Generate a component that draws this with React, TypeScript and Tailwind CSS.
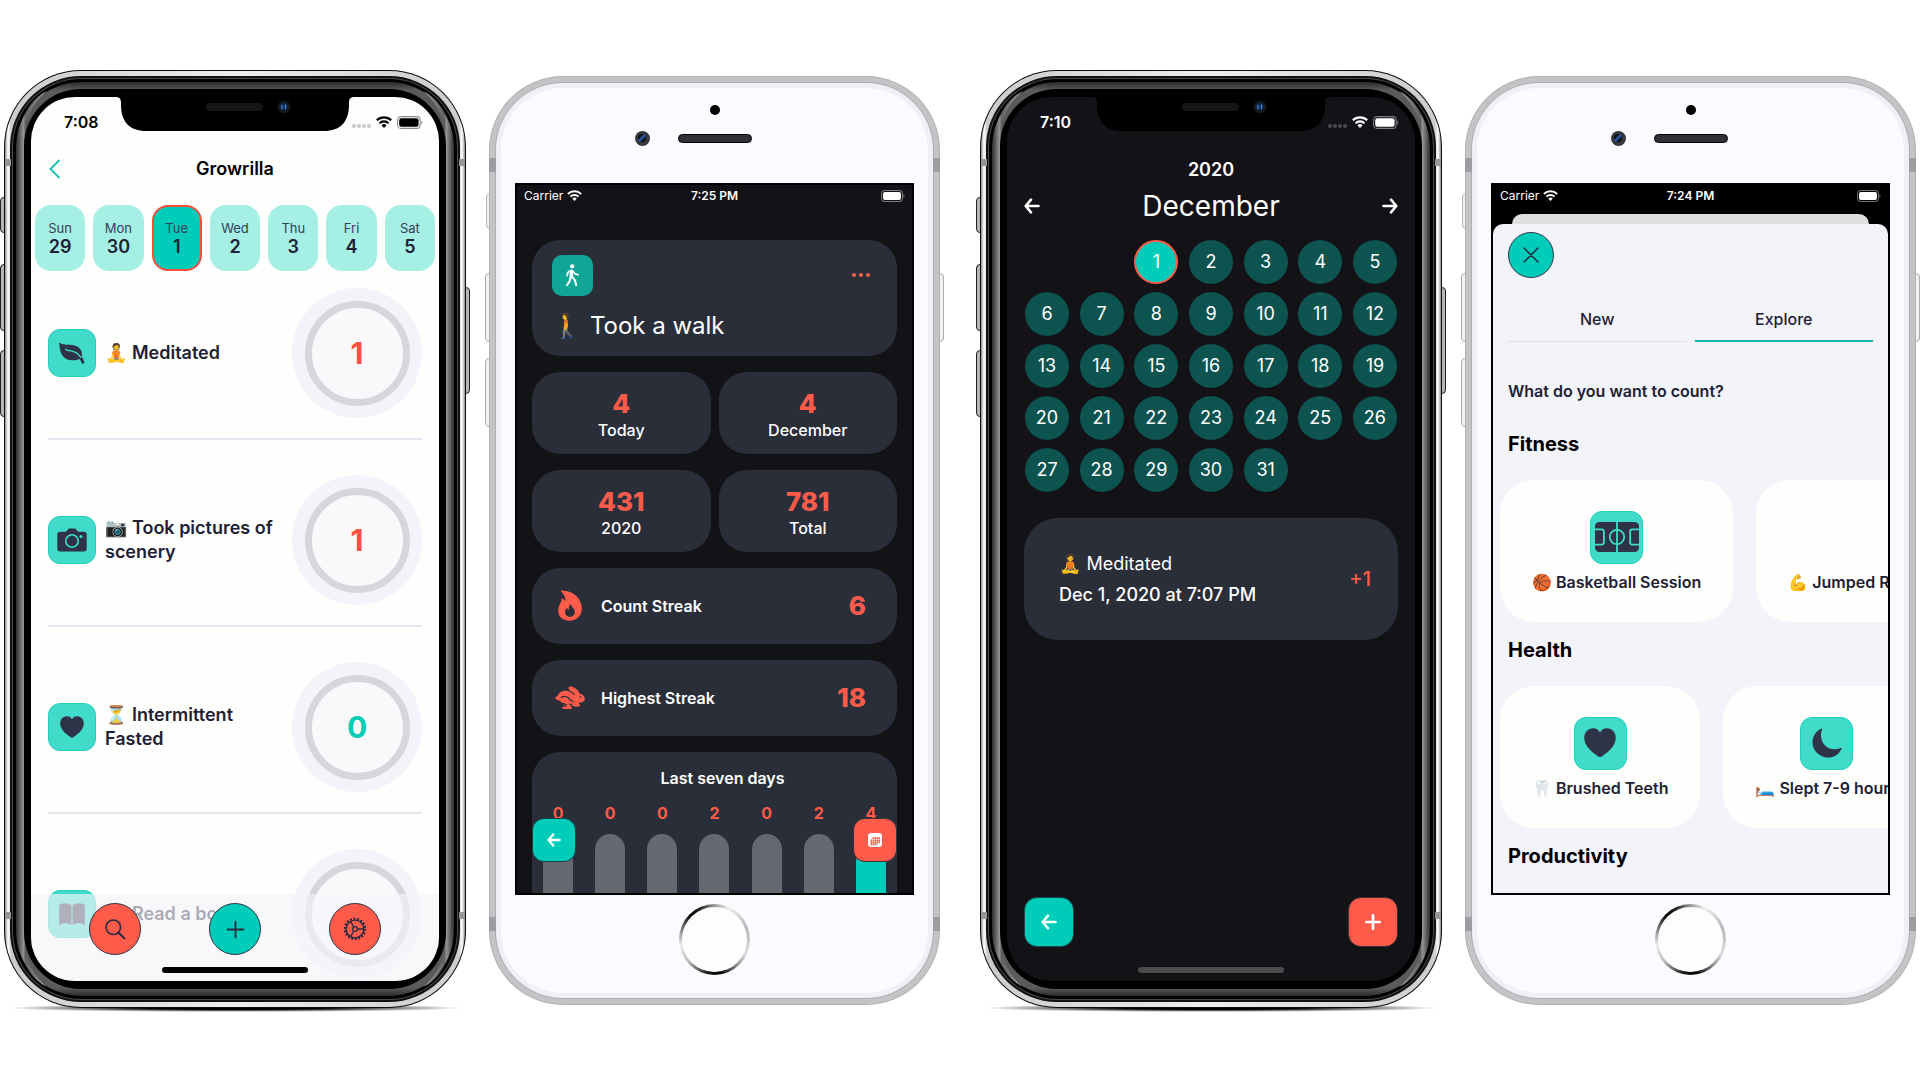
import React from "react";

type IconProps = { className?: string };

const LeafIcon = ({ className }: IconProps) => (
  <svg viewBox="0 0 26 22" className={className} aria-hidden="true">
    <path
      fill="currentColor"
      d="M.4.6C.2 8.6 2.600 17.800 12.500 18.300c3.300.2 5.700-.2 8-1.200 1 1.100 1.600 2.400 2 3.700.5 1.500 2.900 1.100 2.700-.6-.3-2-1.100-3.800-2.500-5.400C24.200 8.400 20 3.300 12.600 2.900 8.200 2.700 3.600 3.200.4.600z"
    />
    <path
      fill="none"
      stroke="#40dbc9"
      strokeWidth="1.300"
      strokeLinecap="round"
      d="M6.500 7.200c1.600 1.400 3.600 1.500 6.200 1.900 3.700.6 6.700 2.600 9 6.200"
    />
  </svg>
);

const CameraIcon = ({ className }: IconProps) => (
  <svg viewBox="0 0 30 24" className={className} aria-hidden="true">
    <path
      fill="currentColor"
      d="M3 3.800h5.200c.8 0 1.200-.3 1.700-1l1-1.400C11.400.6 12 .4 12.900.4h4.300c.9 0 1.500.2 2 1l1 1.400c.5.7.9 1 1.700 1H27c1.700 0 2.700 1 2.700 2.700v14.300c0 1.700-1 2.700-2.700 2.700H3C1.300 23.500.3 22.500.3 20.800V6.500c0-1.700 1-2.700 2.700-2.700z"
    />
    <circle cx="15" cy="13" r="6.200" fill="none" stroke="#40dbc9" strokeWidth="1.600" />
    <circle cx="24" cy="8.600" r="1.500" fill="#40dbc9" />
  </svg>
);

const HeartIcon = ({ className }: IconProps) => (
  <svg viewBox="0 0 24 22" className={className} aria-hidden="true">
    <path
      fill="currentColor"
      d="M12 21.800c-.4 0-.9-.2-1.300-.5C4.400 17.200.2 12.600.2 7.300.2 3.100 3.100.2 6.800.2 9.100.2 11 1.400 12 3.300 13 1.400 14.900.2 17.200.2c3.700 0 6.600 2.900 6.600 7.100 0 5.300-4.200 9.900-10.500 14-.4.300-.9.500-1.300.5z"
    />
  </svg>
);

const BookIcon = ({ className }: IconProps) => (
  <svg viewBox="0 0 26 22" className={className} aria-hidden="true">
    <path
      fill="currentColor"
      d="M12.500 2.400C10.900.9 8.700.2 6.500.2 4 .2 1.800.8.2 2v19.800c1.600-1 3.700-1.500 6-1.500 2.300 0 4.600.5 6.300 1.700zM13.500 2.400C15.100.9 17.300.2 19.500.2c2.500 0 4.700.6 6.300 1.800v19.800c-1.600-1-3.700-1.500-6-1.500-2.300 0-4.600.5-6.300 1.700z"
    />
  </svg>
);

const CourtIcon = ({ className }: IconProps) => (
  <svg viewBox="0 0 44 30" className={className} aria-hidden="true">
    <rect x="0" y="0" width="44" height="30" rx="4.500" fill="currentColor" />
    <g fill="none" stroke="#40dbc9" strokeWidth="1.800">
      <path d="M22 0v30" />
      <circle cx="22" cy="15" r="7.200" />
      <path d="M0 7.400h6.500c1.500 0 2.400.9 2.400 2.400v10.400c0 1.500-.9 2.400-2.400 2.400H0M44 7.400h-6.500c-1.500 0-2.400.9-2.400 2.400v10.400c0 1.500.9 2.400 2.400 2.400H44" />
    </g>
  </svg>
);

const MoonIcon = ({ className }: IconProps) => (
  <svg viewBox="0 0 30 30" className={className} aria-hidden="true">
    <path
      fill="currentColor"
      d="M9.500.5c.6-.3 1 0 .8.600C9.400 3 9 5 9 7.200c0 8 5.800 14.100 13.600 14.100 2.200 0 4.200-.4 6.100-1.200.7-.3 1.100.1.800.8C27.200 26 22.200 29.500 16.200 29.500 7.400 29.500.5 22.700.5 14.300.5 8.300 4.100 2.900 9.500.5z"
    />
  </svg>
);

const WalkIcon = ({ className }: IconProps) => (
  <svg viewBox="0 0 16 24" className={className} aria-hidden="true">
    <circle cx="7.600" cy="2.500" r="2.300" fill="currentColor" />
    <g fill="none" stroke="currentColor" strokeLinecap="round" strokeLinejoin="round">
      <path strokeWidth="3.800" d="M7 7.800 6.600 13" />
      <path strokeWidth="1.800" d="M5.600 7.200C3.600 8 2.400 9 2.200 12.400M8.600 7.800l2 2.700 3.400 1" />
      <path strokeWidth="2.200" d="m6 13.800-1 4.400-3 4.500M7.600 13.600l3 3.800 1.300 5.300" />
    </g>
  </svg>
);

const FlameIcon = ({ className }: IconProps) => (
  <svg viewBox="0 0 24 31" className={className} aria-hidden="true">
    <path
      fill="currentColor"
      fillRule="evenodd"
      d="M3.900.6C2.900.3 2.700 1.100 3.300 1.700c2.500 2.500 4 5.200 4.200 8.200.1 1.100-.2 1.300-.8.5C6.200 9.600 5.300 8.900 4.300 8.600c-.7-.2-1 .1-.9.800.4 3.300-3.200 5.500-3.200 11.200 0 6.200 4.500 10.200 11.200 10.200 7.400 0 12.400-5 12.400-12.200C23.800 9.200 15.900.900 3.900.6zM12 26.900c-3 0-5-1.900-5-4.600 0-1.900.8-3 1.500-3.900.4-.5.8-.4.9.2.1.5.4.9.8 1.200.3.200.6 0 .6-.400 0-1.900.3-3.700 1.300-4.900.3-.4.7-.4.800.1.800 3 3.900 4 3.900 7.500 0 2.800-1.900 4.800-4.800 4.800z"
    />
  </svg>
);

const HareIcon = ({ className }: IconProps) => (
  <svg viewBox="0 0 31 23" className={className} aria-hidden="true">
    <path
      fill="currentColor"
      d="M.3 12.500c0-1 .9-1.700 2-1.900C4.300 6.700 7.600 4.800 11.400 5c2.900.2 5.300 1.500 7.300 3.600l2.700.8c-1-1.500-2.600-2.600-4.400-3.700-1.900-1.200-3.300-2.400-3-3.900.3-1.400 2-1.800 4-1 3.300 1.300 6.300 4 7.600 7.300 2.800.4 5.200 2.500 5.200 5.400 0 1.900-1.300 3-3.500 3.200-1.300.1-2.300.3-3.100.9l1.200 1.500c.8 1.100.2 2.200-1.100 2.200h-3.700c-1 0-1.800-.4-2.400-1.200l-1.500-1.600c-.9-.5-1.900-.5-2.800-.1l2.700 2.200c.9.9 1.100 1.700.7 2.500-.5.9-1.400 1.200-2.800 1.100l-5.500-.2c-1.200-.1-1.700-.9-1.400-1.800.3-.8 1-1 2-.9l2.700.1-3.500-2.300c-1.600-1.100-3.100-1.800-2.900-3.400C1.400 14.200.3 13.600.3 12.500z"
    />
    <path
      fill="none"
      stroke="#292e39"
      strokeWidth="1.300"
      strokeLinecap="round"
      d="M6.500 11.800c3.300-1.800 6.600-.8 8 1.300.9 1.500 2.400 2.600 4.200 2.900M5.500 17.800c2.700.3 4.500.8 6.500 1.700"
    />
    <circle cx="26.200" cy="11.300" r=".9" fill="#292e39" />
  </svg>
);

const GearIcon = ({ className }: IconProps) => (
  <svg viewBox="0 0 26 26" className={className} aria-hidden="true">
    <g fill="none" stroke="currentColor">
      <circle cx="13" cy="13" r="11" strokeWidth="2.400" strokeDasharray="2 1.840" />
      <circle cx="13" cy="13" r="9.600" strokeWidth="1.500" />
      <circle cx="13" cy="13" r="2.500" strokeWidth="1.400" />
      <path strokeWidth="1.400" d="M15.500 13h7M11.700 10.800 8.200 4.700M11.700 15.200l-3.500 6.100" />
    </g>
  </svg>
);

const SearchIcon = ({ className }: IconProps) => (
  <svg viewBox="0 0 22 22" className={className} aria-hidden="true">
    <g fill="none" stroke="currentColor" strokeLinecap="round">
      <circle cx="8.700" cy="8.700" r="7.600" strokeWidth="1.700" />
      <path strokeWidth="2.200" d="m14.300 14.300 6 6" />
    </g>
  </svg>
);

const ArrowIcon = ({ className }: IconProps) => (
  <svg viewBox="0 0 16 16" className={className} aria-hidden="true">
    <path
      fill="none"
      stroke="currentColor"
      strokeWidth="2.600"
      strokeLinecap="round"
      strokeLinejoin="round"
      d="M14.500 8H2M7 1.700 1.700 8 7 14.300"
    />
  </svg>
);

const PlusIcon = ({ className, weight }: IconProps & { weight: number }) => (
  <svg viewBox="0 0 18 18" className={className} aria-hidden="true">
    <path fill="none" stroke="currentColor" strokeWidth={weight} strokeLinecap="round" d="M9 1.500v15M1.500 9h15" />
  </svg>
);

const CalendarIcon = ({ className }: IconProps) => (
  <svg viewBox="0 0 14 14" className={className} aria-hidden="true">
    <rect width="14" height="14" rx="3" fill="currentColor" />
    <path
      stroke="#ff5b4a"
      strokeWidth="1.700"
      strokeDasharray="1.700 .4"
      d="M4.600 5.200H12M2.500 7.300H12M2.500 9.400H12M2.500 11.300h6.800"
    />
  </svg>
);

const WifiIcon = ({ className }: IconProps) => (
  <svg viewBox="0 0 16 12" className={className} aria-hidden="true">
    <path fill="currentColor" d="M8 11.900 5.500 9.300a3.600 3.600 0 0 1 5 0z" />
    <g fill="none" stroke="currentColor" strokeWidth="2.100">
      <path d="M3.500 7.200a6.500 6.500 0 0 1 9 0" />
      <path d="M.8 4.300a10.300 10.300 0 0 1 14.400 0" />
    </g>
  </svg>
);

const BatteryIcon = ({ className }: IconProps) => (
  <svg viewBox="0 0 26 13" className={className} aria-hidden="true">
    <rect x=".6" y=".6" width="22.600" height="11.800" rx="3.400" fill="none" stroke="currentColor" strokeOpacity=".45" strokeWidth="1.100" />
    <rect x="2.200" y="2.200" width="19.400" height="8.600" rx="2" fill="currentColor" />
    <path d="M24.400 4.500c1.300.6 1.300 3.400 0 4z" fill="currentColor" fillOpacity=".5" />
  </svg>
);

/* Bezel highlight that sits in a corner of the notched phone */
const Glint = ({ className }: IconProps) => (
  <svg viewBox="0 0 32 40" className={className} aria-hidden="true">
    <defs>
      <linearGradient id="glint" x1="1" y1="0" x2="0" y2="1">
        <stop offset="0" stopColor="#b5b5b5" />
        <stop offset="1" stopColor="#6a6a6a" stopOpacity="0" />
      </linearGradient>
    </defs>
    <path fill="url(#glint)" d="M28 1C14 8 5 20 1 39h5C9 22 17 10 28 1z" />
  </svg>
);

function NotchedPhone({ dark, time, children }: { dark?: boolean; time: string; children: React.ReactNode }) {
  return (
    <article className="relative min-w-0 pt-0.5 pb-1">
      <div className="absolute inset-x-1 bottom-0 h-2 bg-[radial-gradient(closest-side,#000_40%,#0000)]" />
      <div className="absolute top-[129px] -left-1 h-9 w-2 rounded-l-sm border border-[#222] bg-[#b5b5b5]" />
      <div className="absolute top-[196px] -left-1 h-[67px] w-2 rounded-l-sm border border-[#222] bg-[#b5b5b5]" />
      <div className="absolute top-[282px] -left-1 h-[67px] w-2 rounded-l-sm border border-[#222] bg-[#b5b5b5]" />
      <div className="absolute top-[219px] -right-1 h-[107px] w-2 rounded-r-sm border border-[#222] bg-[#b5b5b5]" />
      <div className="relative rounded-[77px] bg-[#0c0c0c] p-px">
        <div className="rounded-[76px] bg-[linear-gradient(90deg,#8e8e8e,#fff_3px,#ccc_6px,#eee_50%,#ccc_calc(100%_-_6px),#fff_calc(100%_-_3px),#8e8e8e)] p-[5px]">
          <div className="rounded-[71px] bg-[#111] p-[2px]">
            <div className="rounded-[69px] bg-[#4a4a4a] p-px">
              <div className="rounded-[68px] bg-black p-[3px]">
                <div className="relative rounded-[65px] bg-[linear-gradient(90deg,#2c2c2c,#9a9a9a_8px,#0000_9px,#0000_calc(100%_-_9px),#9a9a9a_calc(100%_-_8px),#2c2c2c),linear-gradient(180deg,#2a2a2a,#5a5a5a_8px,#5a5a5a_calc(100%_-_8px),#2a2a2a)] px-2 py-[7px]">
                  <div className="relative rounded-[57px] bg-black px-[7px] py-2">
                    <section
                      className={
                        dark
                          ? "relative flex aspect-[408/884] w-full flex-col overflow-hidden rounded-[44px] bg-[#131217] text-white"
                          : "relative flex aspect-[408/884] w-full flex-col overflow-hidden rounded-[44px] bg-[#fefefd] text-[#1e2134]"
                      }
                    >
                      <header className="flex h-[50px] shrink-0 items-center justify-between pr-4 pl-[33px]">
                        <span className={dark ? "text-base font-semibold" : "text-base font-semibold text-black"}>{time}</span>
                        <span className={dark ? "flex items-center gap-[5px]" : "flex items-center gap-[5px] text-black"}>
                          <span className={dark ? "mt-2 flex gap-px text-[#4b4a4f]" : "mt-2 flex gap-px text-[#c9c9c9]"}>
                            {[0, 1, 2, 3].map((i) => (
                              <span key={i} className="size-1 rounded-full bg-current" />
                            ))}
                          </span>
                          <WifiIcon className="h-3 w-4" />
                          <BatteryIcon className="h-[13px] w-[26px]" />
                        </span>
                      </header>
                      <svg viewBox="0 0 240 35" className="absolute top-0 left-1/2 h-[35px] w-60 -translate-x-1/2" aria-hidden="true">
                        <path d="M0 0h240c-4.500 0-6 1.500-6 6v2c0 17-9 26-25 26H31C15 34 6 25 6 8V6c0-4.500-1.500-6-6-6z" />
                        <rect x="91" y="6" width="57" height="8" rx="4" fill="#151515" />
                        <circle cx="169" cy="10" r="6.500" fill="#15161a" />
                        <circle cx="169" cy="10" r="4" fill="#0c2748" />
                        <path d="M167 8.500v3M170.500 8v3.500" stroke="#3f86d8" strokeWidth="1.300" strokeLinecap="round" />
                      </svg>
                      {children}
                    </section>
                  </div>
                  <Glint className="absolute top-2 left-[3px] h-10 w-8" />
                  <Glint className="absolute top-2 right-[3px] h-10 w-8 -scale-x-100" />
                  <Glint className="absolute bottom-2 left-[3px] h-10 w-8 -scale-y-100" />
                  <Glint className="absolute right-[3px] bottom-2 h-10 w-8 -scale-100" />
                </div>
              </div>
            </div>
          </div>
        </div>
        <div className="absolute top-[89px] left-px h-[7px] w-1.5 bg-[#969696]" />
        <div className="absolute top-[89px] right-px h-[7px] w-1.5 bg-[#969696]" />
        <div className="absolute bottom-[89px] left-px h-[7px] w-1.5 bg-[#969696]" />
        <div className="absolute right-px bottom-[89px] h-[7px] w-1.5 bg-[#969696]" />
      </div>
    </article>
  );
}

function ClassicPhone({ sheet, time, children }: { sheet?: boolean; time: string; children: React.ReactNode }) {
  return (
    <article className="relative min-w-0">
      <div className="absolute top-[117px] -left-[3px] h-9 w-2 rounded-l-sm border border-[#b4b6b9] bg-[#f1f2f4]" />
      <div className="absolute top-[197px] -left-1 h-[69px] w-2 rounded-l-sm border border-[#a9abae] bg-[#f1f2f4]" />
      <div className="absolute top-[282px] -left-1 h-[69px] w-2 rounded-l-sm border border-[#a9abae] bg-[#f1f2f4]" />
      <div className="absolute top-[197px] -right-1 h-[69px] w-2 rounded-r-sm border border-[#a9abae] bg-[#f1f2f4]" />
      <div className="relative rounded-[74px] bg-[#b0b1b4] p-px">
        <div className="rounded-[73px] bg-[#c4c4c7] p-[5px]">
          <div className="rounded-[68px] bg-[#adaeb1] p-px">
            <div className="rounded-[67px] bg-[#eff0f3] p-[5px]">
              <div className="rounded-[62px] bg-[#fafbfe] px-[14px] pb-[18px]">
                <div className="flex h-[95px] flex-col items-center pt-[17px]">
                  <span className="size-[10px] rounded-full bg-black" />
                  <div className="mt-4 flex w-full items-center justify-center gap-7">
                    <span className="flex size-[15px] items-center justify-center rounded-full bg-[#36383d]">
                      <span className="size-2 rounded-full bg-[linear-gradient(135deg,#0b1020_30%,#3a66b8_50%,#0b1020_70%)]" />
                    </span>
                    <span className="mr-[43px] h-[9px] w-[74px] rounded-full border border-black bg-[#303134]" />
                  </div>
                </div>
                <section
                  className={
                    sheet
                      ? "relative flex aspect-[399/712] w-full flex-col overflow-hidden border-2 border-black bg-black text-[#1e2134]"
                      : "relative flex aspect-[399/712] w-full flex-col overflow-hidden border-2 border-black bg-[#131217] text-white"
                  }
                >
                  <header className="grid h-[22px] shrink-0 grid-cols-3 items-center px-[7px] text-xs text-white">
                    <span className="flex items-center gap-1">
                      Carrier <WifiIcon className="h-[11px] w-[15px]" />
                    </span>
                    <span className="text-center font-semibold">{time}</span>
                    <BatteryIcon className="h-3 w-6 justify-self-end" />
                  </header>
                  {children}
                </section>
                <button
                  type="button"
                  aria-label="Home"
                  className="mx-auto mt-[9px] block size-[71px] rounded-full bg-[conic-gradient(#999,#eee_25deg,#b5b5b5_70deg,#ddd_115deg,#888_140deg,#000_170deg,#111_190deg,#bbb_230deg,#eee_260deg,#777_290deg,#000_315deg,#222_335deg,#999)] p-[3px]"
                >
                  <span className="block size-full rounded-full bg-[#fdfdfe]" />
                </button>
              </div>
            </div>
          </div>
        </div>
        <div className="absolute top-[82px] left-0 h-3.5 w-[7px] bg-[#9b9da0]" />
        <div className="absolute top-[82px] right-0 h-3.5 w-[7px] bg-[#9b9da0]" />
        <div className="absolute bottom-[74px] left-0 h-3.5 w-[7px] bg-[#9b9da0]" />
        <div className="absolute right-0 bottom-[74px] h-3.5 w-[7px] bg-[#9b9da0]" />
      </div>
    </article>
  );
}

const week = [
  ["Sun", 29],
  ["Mon", 30],
  ["Tue", 1],
  ["Wed", 2],
  ["Thu", 3],
  ["Fri", 4],
  ["Sat", 5],
] as const;

const habits = [
  { name: "🧘 Meditated", count: 1, icon: <LeafIcon className="w-[26px]" /> },
  { name: "📷 Took pictures of scenery", count: 1, icon: <CameraIcon className="w-[30px]" /> },
  { name: "⏳ Intermittent Fasted", count: 0, icon: <HeartIcon className="w-6" /> },
  { name: "📖 Read a book", count: 0, icon: <BookIcon className="w-[26px]" /> },
];

function HabitsScreen() {
  return (
    <>
      <div className="grid h-11 shrink-0 grid-cols-[1fr_auto_1fr] items-center px-[18px]">
        <button type="button" aria-label="Back" className="w-3 text-[#14bfae]">
          <svg viewBox="0 0 12 20" className="w-3" aria-hidden="true">
            <path d="M10.500 1 1.500 10l9 9" fill="none" stroke="currentColor" strokeWidth="1.800" />
          </svg>
        </button>
        <h1 className="text-lg font-semibold text-black">Growrilla</h1>
      </div>
      <div className="mt-3.5 grid shrink-0 grid-cols-7 gap-2 px-1">
        {week.map(([day, date]) => (
          <button
            type="button"
            key={day}
            className={
              date === 1
                ? "flex h-[66px] flex-col items-center justify-center rounded-2xl border-2 border-[#ff4b3a] bg-[#00cdb9]"
                : "flex h-[66px] flex-col items-center justify-center rounded-2xl bg-[#a6efe5]"
            }
          >
            <span className="text-[13px] leading-[18px] text-[#33405a]">{day}</span>
            <span className="text-lg leading-5 font-semibold">{date}</span>
          </button>
        ))}
      </div>
      <ul className="-mt-[18px] px-[17px]">
        {habits.map((h) => (
          <li key={h.name} className="flex items-center border-b-2 border-[#e4e4ef] pt-[35px] pb-5">
            <span className="flex size-12 shrink-0 items-center justify-center rounded-xl border border-[#22d0bd] bg-[#40dbc9] text-[#2f3347]">
              {h.icon}
            </span>
            <span className="ml-[9px] flex-1 text-lg leading-6 font-semibold">{h.name}</span>
            <button
              type="button"
              aria-label={`Count ${h.name}`}
              className="flex size-[130px] shrink-0 items-center justify-center rounded-full bg-[#f3f3fa]"
            >
              <span
                className={
                  h.count
                    ? "flex size-[105px] items-center justify-center rounded-full border-[7px] border-[#d7d5dd] bg-[#f9f8fb] text-3xl font-bold text-[#ff4f40]"
                    : "flex size-[105px] items-center justify-center rounded-full border-[7px] border-[#d7d5dd] bg-[#f9f8fb] text-3xl font-bold text-[#00cdb4]"
                }
              >
                {h.count}
              </span>
            </button>
          </li>
        ))}
      </ul>
      <nav className="absolute inset-x-0 bottom-0 flex h-[87px] items-start justify-between bg-[#f5f5fb]/65 px-[58px] pt-[9px] text-[#262a40]">
        <button type="button" aria-label="Search" className="flex size-[52px] items-center justify-center rounded-full border border-[#2f3347] bg-[#ff5b4a]">
          <SearchIcon className="w-[21px]" />
        </button>
        <button type="button" aria-label="Add" className="flex size-[52px] items-center justify-center rounded-full border border-[#2f3347] bg-[#00cdb9]">
          <PlusIcon weight={1.7} className="w-[19px]" />
        </button>
        <button type="button" aria-label="Settings" className="flex size-[52px] items-center justify-center rounded-full border border-[#2f3347] bg-[#ff5b4a]">
          <GearIcon className="w-6" />
        </button>
        <span className="absolute bottom-2 left-1/2 h-1.5 w-[146px] -translate-x-1/2 rounded-full bg-black" />
      </nav>
    </>
  );
}

const stats = [
  ["4", "Today"],
  ["4", "December"],
  ["431", "2020"],
  ["781", "Total"],
];

function StatsScreen() {
  return (
    <>
      <div className="flex flex-col gap-4 px-[15px] pt-[33px]">
        <div className="rounded-[28px] bg-[#292e39] px-5 pt-[15px] pb-3">
          <div className="flex items-center justify-between">
            <span className="flex size-[41px] items-center justify-center rounded-[10px] bg-[#0fa697]">
              <WalkIcon className="w-[15px]" />
            </span>
            <button type="button" aria-label="More" className="mr-[7px] flex gap-[3px]">
              {[0, 1, 2].map((i) => (
                <span key={i} className="size-1 rounded-full bg-[#ff5b4a]" />
              ))}
            </button>
          </div>
          <h2 className="mt-3 flex items-center gap-2 text-2xl leading-9">
            <span>🚶</span>Took a walk
          </h2>
        </div>
        <dl className="grid grid-cols-2 gap-x-2 gap-y-4 text-center">
          {stats.map(([n, label]) => (
            <div key={label} className="flex flex-col-reverse rounded-[28px] bg-[#292e39] pt-4 pb-3.5">
              <dt className="text-base leading-5 font-medium">{label}</dt>
              <dd className="text-[26px] leading-8 font-extrabold text-[#ff5b4a]">{n}</dd>
            </div>
          ))}
        </dl>
        <div className="flex h-[76px] items-center rounded-[28px] bg-[#292e39] pr-[31px] pl-[23px]">
          <FlameIcon className="w-[30px] px-[3px] text-[#ff5b4a]" />
          <span className="ml-4 flex-1 text-base font-semibold">Count Streak</span>
          <span className="text-[26px] font-extrabold text-[#ff5b4a]">6</span>
        </div>
        <div className="flex h-[76px] items-center rounded-[28px] bg-[#292e39] pr-[31px] pl-[23px]">
          <HareIcon className="w-[30px] text-[#ff5b4a]" />
          <span className="ml-4 flex-1 text-base font-semibold">Highest Streak</span>
          <span className="text-[26px] font-extrabold text-[#ff5b4a]">18</span>
        </div>
        <div className="rounded-t-[28px] bg-[#292e39] pt-4">
          <h3 className="pl-4 text-center text-base leading-5 font-semibold">Last seven days</h3>
          <div className="mt-[15px] grid grid-cols-7">
            {[0, 0, 0, 2, 0, 2, 4].map((n, i) => (
              <div key={i} className="flex flex-col items-center">
                <span className="text-base leading-5 font-bold text-[#ff5b4a]">{n}</span>
                <span
                  className={
                    i === 6
                      ? "mt-[11px] h-40 w-[30px] rounded-t-full bg-[linear-gradient(#66686f_26px,#00cdb9_26px)]"
                      : "mt-[11px] h-40 w-[30px] rounded-t-full bg-[#66686f]"
                  }
                />
              </div>
            ))}
          </div>
        </div>
      </div>
      <nav className="absolute inset-x-[15px] bottom-[31px] flex justify-between">
        <button type="button" aria-label="Back" className="flex size-[44px] items-center justify-center rounded-xl border border-[#1c3f46] bg-[#00cdb9]">
          <ArrowIcon className="w-[14px]" />
        </button>
        <button type="button" aria-label="Calendar" className="flex size-[44px] items-center justify-center rounded-xl border border-[#3c3039] bg-[#ff5b4a]">
          <CalendarIcon className="w-[14px]" />
        </button>
      </nav>
    </>
  );
}

const days = Array.from({ length: 31 }, (_, i) => i + 1);

function CalendarScreen() {
  return (
    <>
      <p className="pt-[11px] text-center text-lg leading-6 font-semibold">2020</p>
      <div className="mt-1.5 flex items-center justify-between px-[17px]">
        <button type="button" aria-label="Previous month">
          <ArrowIcon className="w-4" />
        </button>
        <h2 className="text-[28px] leading-9">December</h2>
        <button type="button" aria-label="Next month">
          <ArrowIcon className="w-4 -scale-x-100" />
        </button>
      </div>
      <div className="mt-4 grid grid-cols-[repeat(7,44px)] justify-between gap-y-2 px-[18px]">
        {days.map((d) => (
          <button
            type="button"
            key={d}
            className={
              d === 1
                ? "col-start-3 flex size-11 items-center justify-center rounded-full border-2 border-[#ff5b4a] bg-[#00cdb9] text-lg"
                : "flex size-11 items-center justify-center rounded-full bg-[#0d534f] text-lg"
            }
          >
            {d}
          </button>
        ))}
      </div>
      <div className="mx-[17px] mt-[26px] flex items-center justify-between rounded-[34px] bg-[#292e39] py-[30px] pr-[27px] pl-[35px]">
        <div className="text-lg leading-[31px]">
          <p>🧘 Meditated</p>
          <p className="font-medium">Dec 1, 2020 at 7:07 PM</p>
        </div>
        <span className="text-xl font-medium text-[#ff5b4a]">+1</span>
      </div>
      <nav className="absolute inset-x-[17px] bottom-[34px] flex justify-between">
        <button type="button" aria-label="Back" className="flex size-[50px] items-center justify-center rounded-[13px] border border-[#1b4a4e] bg-[#00cdb9]">
          <ArrowIcon className="w-4" />
        </button>
        <button type="button" aria-label="Add" className="flex size-[50px] items-center justify-center rounded-[13px] border border-[#3c3039] bg-[#ff5b4a]">
          <PlusIcon weight={3} className="w-4" />
        </button>
      </nav>
      <span className="absolute bottom-2 left-1/2 h-1.5 w-[146px] -translate-x-1/2 rounded-full bg-[#4c4b4b]" />
    </>
  );
}

const catalog = [
  {
    title: "Fitness",
    items: [
      { name: "🏀 Basketball Session", icon: <CourtIcon className="w-11" /> },
      { name: "💪 Jumped Rope for thirty minutes", icon: <HeartIcon className="w-8" /> },
    ],
  },
  {
    title: "Health",
    items: [
      { name: "🦷 Brushed Teeth", icon: <HeartIcon className="w-8" /> },
      { name: "🛏️ Slept 7-9 hours", icon: <MoonIcon className="w-[30px]" /> },
    ],
  },
  { title: "Productivity", items: [] },
];

function ExploreScreen() {
  return (
    <>
      <div className="mx-[19px] mt-[7px] h-[10px] shrink-0 rounded-t-[10px] bg-[#dfdfdd]" />
      <div className="flex-1 overflow-hidden rounded-t-[10px] bg-[#f3f3fa] pt-2">
        <div className="px-[15px]">
          <button type="button" aria-label="Close" className="flex size-[46px] items-center justify-center rounded-full border border-[#2f3347] bg-[#00cdb9] text-[#262a40]">
            <svg viewBox="0 0 16 16" className="w-4" aria-hidden="true">
              <path d="m1 1 14 14M15 1 1 15" stroke="currentColor" strokeWidth="1.500" strokeLinecap="round" />
            </svg>
          </button>
          <div role="tablist" className="mt-[31px] grid grid-cols-2 gap-2 text-base leading-5 font-medium">
            <button type="button" role="tab" aria-selected="false" className="border-b border-[#e0e1e8] pb-3">
              New
            </button>
            <button type="button" role="tab" aria-selected="true" className="border-b-2 border-[#0fb8a2] pb-[11px]">
              Explore
            </button>
          </div>
          <p className="mt-[39px] text-base leading-5 font-semibold">What do you want to count?</p>
        </div>
        {catalog.map((group, i) => (
          <section key={group.title} className={i === 0 ? "mt-[29px]" : "mt-[14px]"}>
            <h3 className="px-[15px] text-xl leading-7 font-bold text-black">{group.title}</h3>
            <ul className="mt-[22px] flex gap-[23px] pl-[7px]">
              {group.items.map((item) => (
                <li key={item.name} className="flex shrink-0 flex-col items-center gap-2 rounded-[34px] bg-[#fefefd] px-8 pt-[31px] pb-[30px]">
                  <span className="flex size-[53px] items-center justify-center rounded-xl border border-[#22d0bd] bg-[#40dbc9] text-[#2f3347]">
                    {item.icon}
                  </span>
                  <span className="text-base leading-5 font-semibold whitespace-nowrap">{item.name}</span>
                </li>
              ))}
            </ul>
          </section>
        ))}
      </div>
    </>
  );
}

export default function App() {
  return (
    <main className="grid min-h-screen grid-cols-2 items-center gap-10 overflow-hidden bg-white px-1 font-['Inter','Noto_Color_Emoji',sans-serif]">
      <div className="grid min-w-0 grid-cols-[minmax(0,462fr)_minmax(0,451fr)] items-center gap-[23px]">
        <NotchedPhone time="7:08">
          <HabitsScreen />
        </NotchedPhone>
        <ClassicPhone time="7:25 PM">
          <StatsScreen />
        </ClassicPhone>
      </div>
      <div className="grid min-w-0 grid-cols-[minmax(0,462fr)_minmax(0,451fr)] items-center gap-[23px]">
        <NotchedPhone dark time="7:10">
          <CalendarScreen />
        </NotchedPhone>
        <ClassicPhone sheet time="7:24 PM">
          <ExploreScreen />
        </ClassicPhone>
      </div>
    </main>
  );
}
